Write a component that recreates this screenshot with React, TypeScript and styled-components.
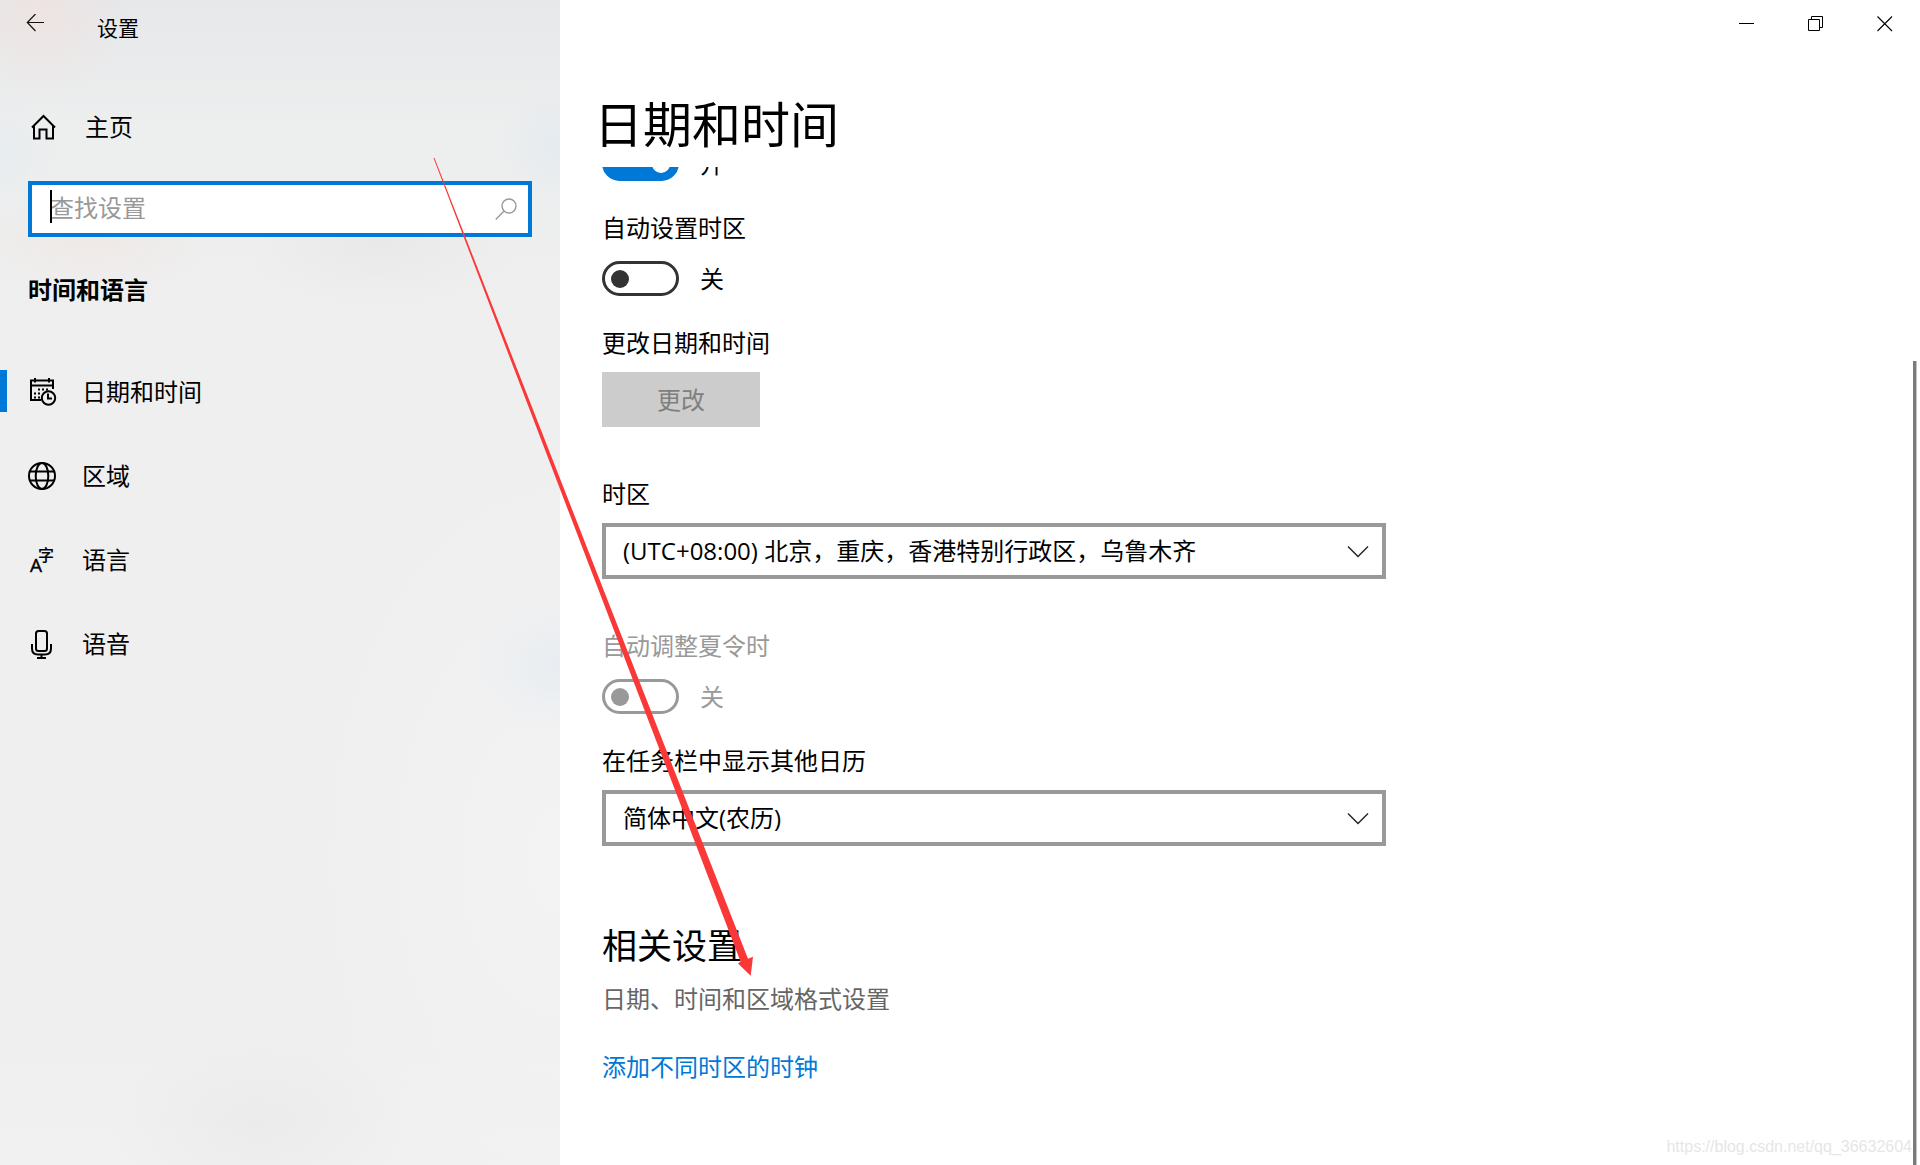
import React from "react";
import styled, { createGlobalStyle, css } from "styled-components";

const accent = "#0078d7";

const GlobalStyle = createGlobalStyle`
  *, *::before, *::after { box-sizing: border-box; }
  body {
    margin: 0;
    background: #fff;
    color: #000;
    font-family: "Open Sans", "Noto Sans CJK SC", sans-serif;
    font-size: 24px;
    line-height: 32px;
  }
  button, input, select { font: inherit; color: inherit; }
  h1, h2, p { margin: 0; font-weight: 400; }
`;

const Window = styled.div`
  position: relative;
  display: flex;
  height: 100vh;
  overflow: hidden;
`;

const Sidebar = styled.aside`
  flex: 0 0 560px;
  background:
    radial-gradient(circle at 40px 10px, rgba(242, 224, 221, 0.6), transparent 90px),
    radial-gradient(ellipse 120px 50px at 90px 240px, rgba(240, 230, 226, 0.6), transparent),
    radial-gradient(ellipse 130px 60px at 380px 245px, rgba(228, 228, 228, 0.5), transparent),
    radial-gradient(ellipse 60px 60px at 0 155px, rgba(229, 236, 240, 0.7), transparent),
    radial-gradient(ellipse 60px 60px at 560px 145px, rgba(226, 234, 240, 0.8), transparent),
    radial-gradient(ellipse 90px 70px at 560px 665px, rgba(230, 236, 241, 0.8), transparent),
    radial-gradient(ellipse 150px 90px at 260px 1125px, rgba(234, 234, 234, 0.8), transparent),
    radial-gradient(ellipse 260px 420px at 560px 860px, rgba(244, 244, 244, 0.8), transparent),
    linear-gradient(#e6e8ea, #edeeee 130px, #efefef 400px, #efefef 1030px, #f1f1f1);
`;

const TitleRow = styled.header`
  display: flex;
  height: 48px;
`;

const IconButton = styled.button`
  display: flex;
  align-items: center;
  justify-content: center;
  width: 69px;
  height: 46px;
  padding: 0;
  border: 0;
  background: transparent;
`;

const WindowTitle = styled.span`
  padding: 14px 0 0 28px;
  font-size: 21px;
  line-height: 28px;
`;

const HomeLink = styled.a`
  display: flex;
  align-items: center;
  gap: 28px;
  height: 48px;
  margin-top: 55px;
  padding-left: 31px;
  color: inherit;
  text-decoration: none;
`;

const SearchBox = styled.div`
  position: relative;
  height: 56px;
  margin: 30px 28px 0;
`;

const SearchInput = styled.input`
  width: 100%;
  height: 100%;
  padding: 0 56px 3px 18px;
  border: 4px solid ${accent};
  border-radius: 0;
  outline: 0;
  background: #fff;
  &::placeholder { color: #999; opacity: 1; }
`;

const Caret = styled.i`
  position: absolute;
  left: 22px;
  top: 9px;
  width: 2px;
  height: 33px;
  background: #000;
`;

const SearchIcon = styled.svg`
  position: absolute;
  right: 15px;
  top: 17px;
`;

const Category = styled.h2`
  margin: 37px 28px 43px;
  font-size: 24px;
  font-weight: 700;
`;

const NavItem = styled.a<{ $active?: boolean }>`
  display: flex;
  align-items: center;
  gap: 24px;
  height: 84px;
  padding: 2px 0 0 20px;
  border-left: 7px solid transparent;
  border-image: ${(p) =>
    p.$active
      ? `linear-gradient(transparent 21px, ${accent} 21px, ${accent} 63px, transparent 63px) 0 0 0 7`
      : "none"};
  color: inherit;
  text-decoration: none;
`;

const Main = styled.main`
  flex: 1;
  min-width: 0;
  display: flex;
  flex-direction: column;
`;

const Controls = styled.div`
  display: flex;
  justify-content: flex-end;
  height: 48px;
  padding: 1px 1px 0 0;
`;

const PageTitle = styled.h1`
  padding: 44px 34px 11px;
  font-size: 49px;
  line-height: 64px;
`;

const ScrollView = styled.div`
  flex: 1;
  min-height: 0;
  overflow: hidden;
`;

/* Scrolled down so that the first switch is partly under the title. */
const Content = styled.div`
  display: flex;
  flex-direction: column;
  align-items: flex-start;
  max-width: 868px;
  margin-top: -21px;
  padding: 0 42px;
`;

const Label = styled.label<{ $gap: number; $disabled?: boolean }>`
  margin: ${(p) => p.$gap}px 0 13px;
  color: ${(p) => (p.$disabled ? "#999" : "#000")};
`;

const ToggleRow = styled.div<{ $disabled?: boolean; $spaced?: boolean }>`
  display: flex;
  align-items: center;
  gap: 21px;
  height: 35px;
  margin-top: ${(p) => (p.$spaced ? 4 : 0)}px;
  color: ${(p) => (p.$disabled ? "#999" : "#000")};
`;

const Toggle = styled.input`
  appearance: none;
  display: flex;
  align-items: center;
  width: 77px;
  height: 35px;
  margin: 0;
  padding: 0 6px;
  border: 3px solid #333;
  border-radius: 18px;
  &::before {
    content: "";
    width: 18px;
    height: 18px;
    border-radius: 50%;
    background: #333;
  }
  &:checked {
    justify-content: flex-end;
    border-color: ${accent};
    background: ${accent};
  }
  &:checked::before { background: #fff; }
  &:disabled { border-color: #999; }
  &:disabled::before { background: #999; }
`;

const ChangeButton = styled.button`
  width: 158px;
  height: 55px;
  padding: 0;
  border: 0;
  background: #ccc;
  &:disabled { color: #7f7f7f; }
`;

const SelectBox = styled.div`
  position: relative;
  width: 100%;
`;

const Select = styled.select`
  appearance: none;
  display: block;
  width: 100%;
  height: 56px;
  padding: 0 56px 0 17px;
  border: 4px solid #999;
  border-radius: 0;
  background: #fff;
`;

const Chevron = styled.svg`
  position: absolute;
  right: 17px;
  top: 22px;
  pointer-events: none;
`;

const SectionTitle = styled.h2`
  margin: 76px 0 13px;
  font-size: 35px;
  line-height: 48px;
`;

const RelatedLink = styled.a<{ $muted?: boolean }>`
  text-decoration: none;
  color: ${accent};
  ${(p) =>
    p.$muted &&
    css`
      color: #666;
      margin-bottom: 36px;
    `}
`;

const ScrollThumb = styled.div`
  position: absolute;
  top: 361px;
  right: 3px;
  bottom: 0;
  width: 4px;
  background: #7a7a7a;
  border-right: 1px solid #c2c2c2;
`;

const Watermark = styled.span`
  position: absolute;
  right: 8px;
  bottom: 6px;
  font-family: "Liberation Sans", sans-serif;
  font-size: 16px;
  line-height: 24px;
  color: #e6e6e6;
`;

const Annotation = styled.svg`
  position: absolute;
  left: 0;
  top: 0;
  pointer-events: none;
`;

const Stroke = styled.svg`
  flex: none;
  fill: none;
  stroke: #000;
  stroke-width: 2;
`;

const HomeIcon = () => (
  <Stroke width="26" height="28" viewBox="0 0 26 28">
    <path d="M1 14.500 12.500 3 24 14.500M3 13v12.500h5.500v-9h7v9H22V13" />
  </Stroke>
);

const CalendarIcon = () => (
  <Stroke width="31" height="32" viewBox="0 0 31 32">
    <path d="M14 24H4V4.500h22V13M4 9.500h22M8 2v4.500M22 2v4.500" />
    <path d="M11 13.500h10M7 17.500h8M7 21.500h6" strokeDasharray="2 2" />
    <circle cx="21.500" cy="22" r="6.700" />
    <path d="M21 17.500v5h4" />
  </Stroke>
);

const GlobeIcon = () => (
  <Stroke width="31" height="32" viewBox="0 0 31 32">
    <circle cx="15" cy="16" r="13" />
    <ellipse cx="15" cy="16" rx="6.300" ry="13" />
    <path d="M3 11.500h24M3 20.500h24" />
  </Stroke>
);

const LanguageIcon = () => (
  <svg
    width="31"
    height="32"
    viewBox="0 0 31 32"
    overflow="visible"
    fontFamily='"Open Sans", "Noto Sans CJK SC", sans-serif'
  >
    <text x="3" y="28" fontSize="19" stroke="#000" strokeWidth="0.4">A</text>
    <text x="11" y="17" fontSize="16" fontWeight="500">字</text>
  </svg>
);

const MicIcon = () => (
  <Stroke width="31" height="32" viewBox="0 0 31 32">
    <rect x="9" y="3" width="11" height="20" rx="2.500" />
    <path d="M5 16v4.500q0 6 6 6h7q6 0 6-6V16M14.500 26.500V30M10 30h9" />
  </Stroke>
);

const navigation = [
  { label: "日期和时间", icon: <CalendarIcon />, active: true },
  { label: "区域", icon: <GlobeIcon /> },
  { label: "语言", icon: <LanguageIcon /> },
  { label: "语音", icon: <MicIcon /> },
];

function Dropdown({ id, value }: { id: string; value: string }) {
  return (
    <SelectBox>
      <Select id={id} defaultValue={value}>
        <option>{value}</option>
      </Select>
      <Chevron width="22" height="13" viewBox="0 0 22 13" fill="none" stroke="#222" strokeWidth="1.400">
        <path d="m1 1.500 10 10 10-10" />
      </Chevron>
    </SelectBox>
  );
}

export default function App() {
  return (
    <>
      <GlobalStyle />
      <Window>
        <Sidebar>
          <TitleRow>
            <IconButton aria-label="返回">
              <svg width="18" height="18" viewBox="0 0 18 18" fill="none" stroke="#111" strokeWidth="1.200">
                <path d="M18 8.500H1.500M9.500 0 1.300 8.500 9.500 17" />
              </svg>
            </IconButton>
            <WindowTitle>设置</WindowTitle>
          </TitleRow>
          <HomeLink href="#home">
            <HomeIcon />
            主页
          </HomeLink>
          <SearchBox>
            <SearchInput type="text" aria-label="查找设置" placeholder="查找设置" />
            <Caret />
            <SearchIcon width="22" height="23" viewBox="0 0 22 23" fill="none" stroke="#999" strokeWidth="1.400">
              <circle cx="14" cy="8" r="7" />
              <path d="M9 13 .800 21.500" />
            </SearchIcon>
          </SearchBox>
          <Category>时间和语言</Category>
          <nav>
            {navigation.map((item) => (
              <NavItem key={item.label} href="#" $active={item.active}>
                {item.icon}
                {item.label}
              </NavItem>
            ))}
          </nav>
        </Sidebar>

        <Main>
          <Controls>
            <IconButton aria-label="最小化">
              <svg width="16" height="16" viewBox="0 0 16 16" stroke="#000">
                <path d="M0 7.500h15" />
              </svg>
            </IconButton>
            <IconButton aria-label="还原">
              <svg width="16" height="16" viewBox="0 0 16 16" fill="none" stroke="#000">
                <path d="M.500 3.500h11v11H.500zM3.500 3.500v-3h11v11h-3" />
              </svg>
            </IconButton>
            <IconButton aria-label="关闭">
              <svg width="16" height="16" viewBox="0 0 16 16" stroke="#000" strokeWidth="1.100">
                <path d="m.500.500 14.500 14.500M15 .500.500 15" />
              </svg>
            </IconButton>
          </Controls>
          <PageTitle>日期和时间</PageTitle>
          <ScrollView>
            <Content>
              <ToggleRow>
                <Toggle type="checkbox" id="auto-time" defaultChecked />
                <label htmlFor="auto-time">开</label>
              </ToggleRow>

              <Label htmlFor="auto-zone" $gap={31}>自动设置时区</Label>
              <ToggleRow $spaced>
                <Toggle type="checkbox" id="auto-zone" />
                <span>关</span>
              </ToggleRow>

              <Label htmlFor="change" $gap={31}>更改日期和时间</Label>
              <ChangeButton id="change" disabled>更改</ChangeButton>

              <Label htmlFor="zone" $gap={51}>时区</Label>
              <Dropdown id="zone" value="(UTC+08:00) 北京，重庆，香港特别行政区，乌鲁木齐" />

              <Label htmlFor="dst" $gap={51} $disabled>自动调整夏令时</Label>
              <ToggleRow $disabled $spaced>
                <Toggle type="checkbox" id="dst" disabled />
                <span>关</span>
              </ToggleRow>

              <Label htmlFor="calendar" $gap={31}>在任务栏中显示其他日历</Label>
              <Dropdown id="calendar" value="简体中文(农历)" />

              <SectionTitle>相关设置</SectionTitle>
              <RelatedLink href="#formats" $muted>日期、时间和区域格式设置</RelatedLink>
              <RelatedLink href="#clocks">添加不同时区的时钟</RelatedLink>
            </Content>
          </ScrollView>
        </Main>

        <ScrollThumb />
        <Watermark>https://blog.csdn.net/qq_36632604</Watermark>
        <Annotation width="800" height="1000" viewBox="0 0 800 1000" aria-hidden="true">
          <path d="M433.500 158h1L748 958.700 753 956.700 750.700 975.700 738 963.500 740.500 961.500Z" fill="#fb3838" />
        </Annotation>
      </Window>
    </>
  );
}
